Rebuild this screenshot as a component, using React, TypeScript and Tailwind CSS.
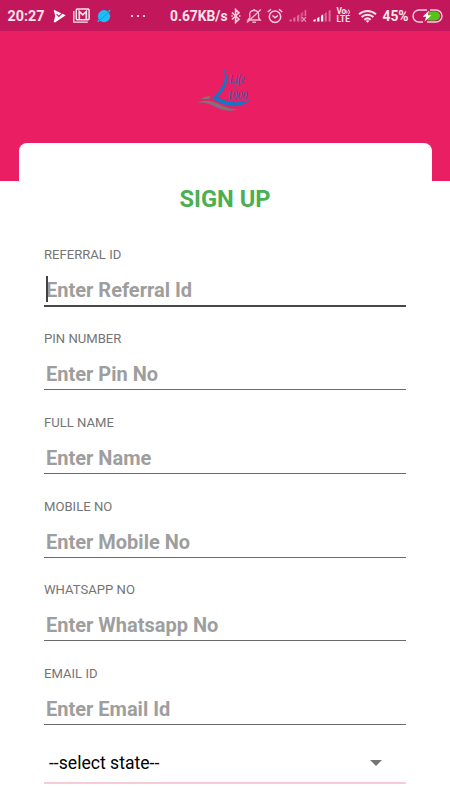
type Field = {
  label: string;
  placeholder: string;
  focused?: boolean;
};

const fields: Field[] = [
  { label: 'REFERRAL ID', placeholder: 'Enter Referral Id', focused: true },
  { label: 'PIN NUMBER', placeholder: 'Enter Pin No' },
  { label: 'FULL NAME', placeholder: 'Enter Name' },
  { label: 'MOBILE NO', placeholder: 'Enter Mobile No' },
  { label: 'WHATSAPP NO', placeholder: 'Enter Whatsapp No' },
  { label: 'EMAIL ID', placeholder: 'Enter Email Id' },
];

function PlayIcon() {
  return (
    <svg className="ml-[7px] h-[14px] w-[13px] shrink-0" viewBox="0 0 13 14">
      <path d="M.7.7 12.700 6.200 2 13.400.7 13 2.200 7z" fill="#fff" />
      <path d="m3.600 5.200 2.300 2.300 3.200-3.400" fill="none" stroke="#c2185b" strokeWidth="1.100" />
    </svg>
  );
}

function MailIcon() {
  return (
    <svg className="ml-[7px] h-[15px] w-[17px] shrink-0" viewBox="0 0 17 15" fill="none" stroke="#fce4ec">
      <path d="M.8 3v11.200h14" strokeWidth="1.300" />
      <rect x="3.300" y="1" width="12.800" height="10.800" rx="1" strokeWidth="1.500" />
      <path d="M6.300 11V3.500l3.500 3.300 3.500-3.300V11" strokeWidth="1.700" />
    </svg>
  );
}

function GlobeIcon() {
  return (
    <svg className="ml-[7px] h-[14px] w-[14px] shrink-0" viewBox="0 0 14 14">
      <circle cx="7" cy="7.200" r="6.100" fill="#1cbcf5" />
      <path d="M.6 13.300.9 10.500 2.800 12zM10.800 1.800l2.600-1.200-.7 3z" fill="#1cbcf5" />
      <path d="m2.200 11.600 10-8.600" stroke="#1495dc" strokeWidth=".8" />
    </svg>
  );
}

function BluetoothIcon() {
  return (
    <svg className="ml-[2px] h-[16px] w-[10px] shrink-0" viewBox="0 0 10 16" fill="none" stroke="#f8cfdf" strokeWidth="1.600">
      <path d="m1 4.500 7 6.700L4.600 14.400V1.600L8 4.800l-7 6.700" />
      <path d="M.3 8h1.500M8 8h1.500" strokeWidth="1.500" />
    </svg>
  );
}

function BellOffIcon() {
  return (
    <svg className="ml-[5px] h-[16px] w-[16px] shrink-0" viewBox="0 0 16 16" fill="none" stroke="#f1b9cf" strokeWidth="1.400">
      <path d="M2 12h12.200l-1.600-2V6.500C12.600 4 10.900 2.500 8.200 2.500S3.700 4 3.700 6.500V10z" />
      <path d="M8.200 2.800V1M6.400 14.200h3.500" strokeWidth="1.600" />
      <path d="M1 14.500 14.800 1.600" />
    </svg>
  );
}

function AlarmIcon() {
  return (
    <svg className="ml-[5px] h-[16px] w-[16px] shrink-0" viewBox="0 0 16 16" fill="none" stroke="#f8cfdf" strokeWidth="1.500">
      <circle cx="8" cy="8.700" r="5.700" />
      <path d="M.8 4 4 1.200M15.200 4 12 1.200M5.400 7.500 8 9.700l3-2.200" />
    </svg>
  );
}

function SignalBars({ off }: { off?: boolean }) {
  const lit = off ? '#dc6c98' : '#fff';
  return (
    <svg className="ml-[6px] h-[14px] w-[18px] shrink-0" viewBox="0 0 18 14">
      <path d="M.4 12.600v-1.500L2.600 10v2.600zM4.200 12.600v-3.500l2.200-1.200v4.700z" fill={lit} />
      <path d="M8 12.600V6.800l2.200-1.500v7.300z" fill={lit} />
      {off ? (
        <>
          <path d="M11.700 12.600V4.500l1-.7v8.800zM13.400 7V3.200l.8-.6V7zM15.600 7V1.500l1.600-.9V7z" fill="#dc6c98" />
          <path d="m12.800 8 4.200 4.600m0-4.600-4.200 4.600" stroke="#e58fb1" strokeWidth="1.300" />
        </>
      ) : (
        <path d="M11.700 12.600V4.400l2-1.500v9.700zM15.600 12.600V1.700l2-1v11.900z" fill="#dc6c98" />
      )}
    </svg>
  );
}

function VolteIcon() {
  return (
    <div className="ml-[6px] flex w-[16px] shrink-0 flex-col text-[8.300px] leading-[7px]">
      <span className="flex h-[7px] items-center">
        <span className="tracking-tight">Vo</span>
        <svg className="h-[6px] w-[5px] shrink-0" viewBox="0 0 5 6" fill="none" stroke="#fce4ec">
          <path d="M.6 1.500q1 1.500 0 3M2.500.6q2 2.400 0 4.800" />
        </svg>
      </span>
      <span className="mt-px h-[7px]">LTE</span>
    </div>
  );
}

function WifiIcon() {
  return (
    <svg className="ml-[5px] h-[14px] w-[19px] shrink-0" viewBox="0 0 19 14" fill="none" stroke="#fce4ec" strokeWidth="2">
      <path d="M1 5.200c5-4.400 12-4.400 17 0M3.600 8c3.400-3 8.400-3 11.800 0M6.300 10.700c1.900-1.600 4.500-1.600 6.400 0" />
      <path d="M7.500 11.800q2-1.200 4 0l-2 1.900z" fill="#fce4ec" stroke="none" />
    </svg>
  );
}

function BatteryIcon() {
  return (
    <svg className="h-[16px] w-[31px] shrink-0" viewBox="0 0 31 16">
      <path d="M17 3.400h6.500a4.500 4.500 0 0 1 0 9H15.500z" fill="#52c41a" />
      <path d="M15 2H7a6 6 0 0 0 0 12h4M18 2h6a6 6 0 0 1 0 12h-9" fill="none" stroke="#f8cfdf" strokeWidth="1.400" />
      <path d="M17 2.400 10.600 8.800h3.600L12.600 13.800 19.400 7.300h-3.500z" fill="#fff" />
    </svg>
  );
}

function StatusBar() {
  return (
    <div className="flex h-[31px] items-center bg-[#c2185b] pl-[7.500px] text-[14.300px] font-bold text-[#fce4ec]">
      <span className="w-[38px] shrink-0 pt-[2px] whitespace-nowrap">20:27</span>
      <PlayIcon />
      <MailIcon />
      <GlobeIcon />
      <div className="ml-[20px] flex w-[39.500px] shrink-0 gap-[4px]">
        <span className="size-[2px] bg-[#f8cfdf]" />
        <span className="size-[2px] bg-[#f8cfdf]" />
        <span className="size-[2px] bg-[#f8cfdf]" />
      </div>
      <span className="w-[58.500px] shrink-0 pt-px text-[13.800px] whitespace-nowrap">0.67KB/s</span>
      <BluetoothIcon />
      <BellOffIcon />
      <AlarmIcon />
      <SignalBars off />
      <SignalBars />
      <VolteIcon />
      <WifiIcon />
      <span className="ml-[6px] w-[29px] shrink-0 pt-px text-[13.800px] whitespace-nowrap">45%</span>
      <BatteryIcon />
    </div>
  );
}

function Logo() {
  return (
    <svg className="h-[60px] w-[70px]" viewBox="0 0 70 60">
      <path d="M10.500 39 15 36.700l5.500-.8-1.500 3.400z" fill="#89717a" />
      <path d="M6.500 42.500C15 39.500 22 40.500 31 45c6 3 11 4.500 17 4-7 3-14 2-21-1.500-7-3.800-13-5.500-20.500-5z" fill="#82707c" />
      <path d="M33.300 8.300C39.500 15.500 38.500 26.500 27.500 37.200 38 42.500 48 44 60.300 39.800 50 49 38 48 22.300 38.700 32 28 38 20 33.300 8.300z" fill="#0f79c8" />
      <path d="M46.500 25.300q-1.300 0-1.600 1.700l-.8 3.200M43.800 27h2.400" fill="none" stroke="#5a5fa0" strokeWidth=".7" />
      <g fill="#2a68b4" fontFamily="Liberation Serif, serif" fontStyle="italic">
        <text x="39.500" y="22.500" fontSize="12" textLength="15.500" lengthAdjust="spacingAndGlyphs">Life</text>
        <text x="37.500" y="38.800" fontSize="12" textLength="20" lengthAdjust="spacingAndGlyphs">1000</text>
      </g>
    </svg>
  );
}

function FormField({ label, placeholder, focused }: Field) {
  return (
    <label className="block h-[83.800px]">
      <span className="block h-[16px] text-[13.100px] leading-[16px] text-[#757575]">{label}</span>
      <div className="relative mt-[8px]">
        <input
          type="text"
          placeholder={placeholder}
          className={`block w-full pt-[4px] pl-[2px] text-[20px] font-bold outline-none placeholder:text-[#9e9e9e] ${
            focused ? 'h-[36px] border-b-2 border-[#4b4747]' : 'h-[35px] border-b border-[#6b6b6b]'
          }`}
        />
        {focused && <span className="absolute top-[5px] left-[2px] h-[26px] w-[2px] bg-[#424242]" />}
      </div>
    </label>
  );
}

export default function App() {
  return (
    <div className="h-[800px] w-[450px] overflow-hidden bg-white font-[Roboto,sans-serif]">
      <StatusBar />
      <header className="flex h-[150px] justify-center bg-[#e91e63] pt-[29px]">
        <Logo />
      </header>
      <main className="relative mx-auto -mt-[38px] w-[413px] rounded-t-[8px] bg-white px-[25.500px] pt-[42px]">
        <h1 className="text-center text-[23.700px] leading-[28px] font-bold text-[#4caf50]">SIGN UP</h1>
        <form className="mt-[34.200px]">
          {fields.map((field) => (
            <FormField key={field.label} {...field} />
          ))}
          <div className="-mt-[1px] flex h-[35px] items-start justify-between border-b-2 border-[#f8cbd9] pr-[24px] pl-[5px]">
            <span className="text-[17.600px] leading-[29px] text-black">--select state--</span>
            <svg className="mt-[11px] h-[6px] w-[12px]" viewBox="0 0 12 6">
              <path d="M0 0h12L6 6z" fill="#757575" />
            </svg>
          </div>
        </form>
      </main>
    </div>
  );
}
